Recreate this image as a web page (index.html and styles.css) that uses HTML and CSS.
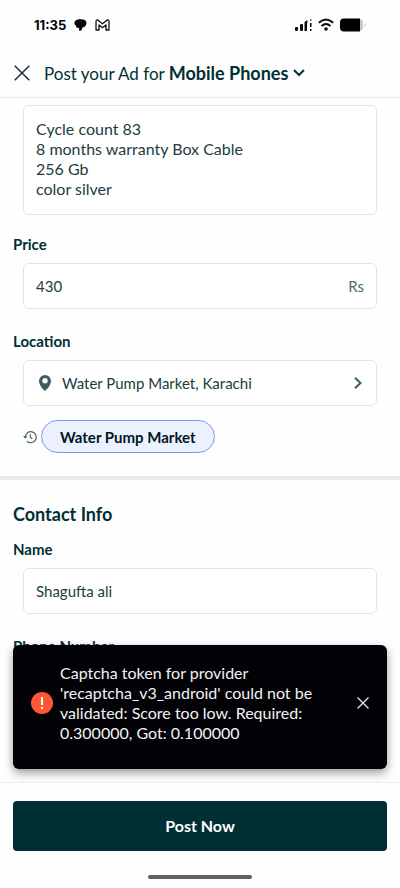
FILE: index.html
```html
<!DOCTYPE html>
<html lang="en">
<head>
<meta charset="utf-8">
<meta name="viewport" content="width=device-width, initial-scale=1">
<title>Post your Ad</title>
<link rel="stylesheet" href="styles.css">
</head>
<body>
<div class="app">
  <div class="status">
    <div class="status-left">
      <span class="time">11:35</span>
      <svg width="13" height="13" viewBox="0 0 13 13" aria-hidden="true"><path fill="#080808" d="M4 1.500Q6 .500 8 1.500q4-.500 4.500 3.500-.500 4-4 4.500L7.500 12.500 5 12.800 5.200 10Q2 10.500 1.800 7.500-.500 6 .800 3.500 2 1.500 4 1.500z"/></svg>
      <svg width="15" height="12" viewBox="0 0 15 12" aria-hidden="true"><path fill="none" stroke="#111" stroke-width="1.300" stroke-linejoin="round" d="M1 2.500V11h3V6l3.500 2.700L11 6v5h3V2.500Q14 1 12.500 1 12 1 11 2L7.500 4.800 4 2Q3 1 2.500 1 1 1 1 2.500z"/></svg>
    </div>
    <div class="status-right">
      <svg width="17" height="13" viewBox="0 0 17 13" aria-hidden="true"><g fill="#0a0a0a"><rect x="0" y="9" width="3" height="4" rx="1"/><rect x="5" y="6" width="3" height="7" rx="1"/><path d="M9.500 5q0-2 3-2.500v2L12 6v7H9.500z"/><rect x="15" y="1" width="1.500" height="2" opacity=".6"/><rect x="15" y="5" width="1.500" height="4"/><rect x="15" y="11" width="1.500" height="2"/></g></svg>
      <svg width="16" height="13" viewBox="0 0 16 13" aria-hidden="true"><g fill="none" stroke="#0a0a0a" stroke-width="2"><path d="M.8 4.800Q8-1.800 15.200 4.800M3.600 8Q8 4 12.400 8"/></g><circle cx="8" cy="11" r="1.800" fill="#0a0a0a"/></svg>
      <svg width="26" height="14" viewBox="0 0 26 14" aria-hidden="true"><rect x="1" y="1" width="22" height="12" rx="4" fill="#c8c8c8"/><path fill="#000" d="M4 .500h16v13H4Q0 13.500 0 9.500v-5Q0 .500 4 .500z"/><path fill="#bbb" d="M24.500 5q2 2 0 4z"/></svg>
    </div>
  </div>
  <header class="header">
    <button class="icon-btn" aria-label="Close"><svg width="16" height="16" viewBox="0 0 16 16"><path fill="none" stroke="#163236" stroke-width="1.500" d="M.7.700l14.600 14.600M15.300.700L.7 15.300"/></svg></button>
    <button class="category"><span>Post your Ad for <b>Mobile Phones</b></span>
      <svg width="12" height="8" viewBox="0 0 12 8" aria-hidden="true"><path fill="none" stroke="#002f34" stroke-width="2" d="M1 1l5 5 5-5"/></svg>
    </button>
  </header>
  <main class="form">
    <section class="section">
      <textarea class="box description" aria-label="Description" rows="4">Cycle count 83
8 months warranty Box Cable
256 Gb
color silver</textarea>
      <div class="field">
        <label class="label" for="price">Price</label>
        <div class="box row"><input id="price" class="input" type="text" value="430"><span class="unit">Rs</span></div>
      </div>
      <div class="field">
        <label class="label" for="location">Location</label>
        <button id="location" class="box row">
          <svg class="pin" width="12" height="16" viewBox="0 0 12 16" aria-hidden="true"><path fill="#3a5f62" fill-rule="evenodd" d="M6 0a6 6 0 0 1 6 6c0 4-4 8.500-6 10C4 14.500 0 10 0 6a6 6 0 0 1 6-6zm0 3a2.700 2.700 0 1 0 0 5.400A2.700 2.700 0 0 0 6 3z"/></svg>
          <span class="place">Water Pump Market, Karachi</span>
          <svg class="next" width="8" height="12" viewBox="0 0 8 12" aria-hidden="true"><path fill="none" stroke="#3a5f62" stroke-width="2" d="M1 .700L6.500 6 1 11.300"/></svg>
        </button>
      </div>
      <div class="recent">
        <svg width="14" height="14" viewBox="0 0 14 14" aria-hidden="true"><g fill="none" stroke="#4f6669" stroke-width="1.200"><path d="M2.200 7A5.500 5.500 0 1 1 4 11.300M7.300 4v3.300l2 1.500"/></g><path fill="#4f6669" d="M0 6h4.500L2.200 8.800z"/></svg>
        <button class="chip">Water Pump Market</button>
      </div>
    </section>
    <section class="section contact">
      <h2 class="heading">Contact Info</h2>
      <div class="field">
        <label class="label" for="name">Name</label>
        <div class="box row"><input id="name" class="input" type="text" value="Shagufta ali"></div>
      </div>
      <div class="field">
        <label class="label" for="phone">Phone Number</label>
        <div class="box row"><input id="phone" class="input" type="tel"></div>
      </div>
    </section>
  </main>
  <footer class="footer">
    <div class="toast" role="alert">
      <svg class="alert" width="22" height="22" viewBox="0 0 22 22" aria-hidden="true"><circle cx="11" cy="11" r="11" fill="#ff5636"/><path stroke="#fff" stroke-width="2" d="M11 5v8M11 15v2"/></svg>
      <p class="message">Captcha token for provider 'recaptcha_v3_android' could not be validated: Score too low. Required: 0.300000, Got: 0.100000</p>
      <button class="icon-btn" aria-label="Dismiss"><svg width="12" height="12" viewBox="0 0 12 12"><path fill="none" stroke="#e8e8e8" stroke-width="1.300" d="M.5.500l11 11M11.500.500l-11 11"/></svg></button>
    </div>
    <button class="submit">Post Now</button>
    <div class="home"></div>
  </footer>
</div>
</body>
</html>
```
FILE: styles.css
```css
* { box-sizing: border-box; }
body { margin: 0; background: #fefefe; color: #002f34; font-family: Lato, "Liberation Sans", sans-serif; font-size: 16px; line-height: 20px; }
button, input, textarea { font: inherit; color: inherit; }
button { border: 0; padding: 0; background: none; text-align: left; }
svg { flex: none; display: block; }
.app { display: flex; flex-direction: column; height: 100vh; }
.status { display: flex; justify-content: space-between; align-items: center; height: 49px; padding: 0 34px; color: #000; }
.status-left { display: flex; align-items: center; gap: 8px; }
.status-right { display: flex; align-items: center; gap: 6px; }
.time { font-family: Inter, sans-serif; font-size: 13px; font-weight: 700; }
.header { display: flex; align-items: center; gap: 14px; height: 49px; padding: 0 14px; border-bottom: 1px solid #ebeced; }
.icon-btn { display: grid; place-items: center; }
.header .icon-btn { width: 16px; height: 32px; }
.category { display: flex; align-items: center; gap: 5px; font-size: 17px; }
.category b { font-size: 18px; }
.form { flex: 1; min-height: 0; overflow: hidden; }
.section { display: flex; flex-direction: column; padding: 7px 23px 23px; }
.contact { border-top: 4px solid #e7eaea; padding-top: 24px; }
.box { width: 100%; border: 1px solid #e2e5e5; border-radius: 6px; background: #fff; color: #233c40; }
.description { display: block; height: 110px; padding: 13px 12px; resize: none; overflow: hidden; margin-bottom: 19px; }
.field { display: flex; flex-direction: column; gap: 9px; margin-bottom: 22px; }
.label { margin-left: -10px; font-weight: 700; font-size: 15px; }
.row { display: flex; align-items: center; height: 46px; padding: 0 12px; font-size: 15px; }
.input { flex: 1; min-width: 0; border: 0; padding: 0; background: none; outline: 0; }
.unit { color: #4b6c6f; }
.pin { margin: 0 11px 0 3px; }
.place { flex: 1; }
.next { margin-right: 2px; }
.recent { display: flex; align-items: center; gap: 4px; margin-top: -8px; }
.chip { height: 33px; padding: 0 17px; border: 1px solid #7796f0; border-radius: 17px; background: #ebf1ff; color: #00171b; font-weight: 700; }
.chip { font-size: 15px; padding: 0 18px; }
.heading { margin: 0 0 15px -10px; font-size: 18px; line-height: 20px; }
.footer { position: relative; padding: 18px 13px 9px; border-top: 1px solid #ebeced; background: #fefefe; }
.toast { position: absolute; left: 13px; right: 13px; bottom: 119px; display: flex; align-items: center; gap: 7px; padding: 18px 18px 26px; border-radius: 6px; background: #010106; color: #f2f2f2; box-shadow: 0 4px 10px rgba(0, 0, 0, 0.4); }
.message { flex: 1; margin: 0; padding-right: 24px; }
.submit { display: block; width: 100%; height: 50px; border-radius: 4px; background: #002f34; color: #fff; text-align: center; font-weight: 700; }
.home { width: 104px; height: 4px; margin: 24px auto 0; border-radius: 2px; background: #606060; }
```
